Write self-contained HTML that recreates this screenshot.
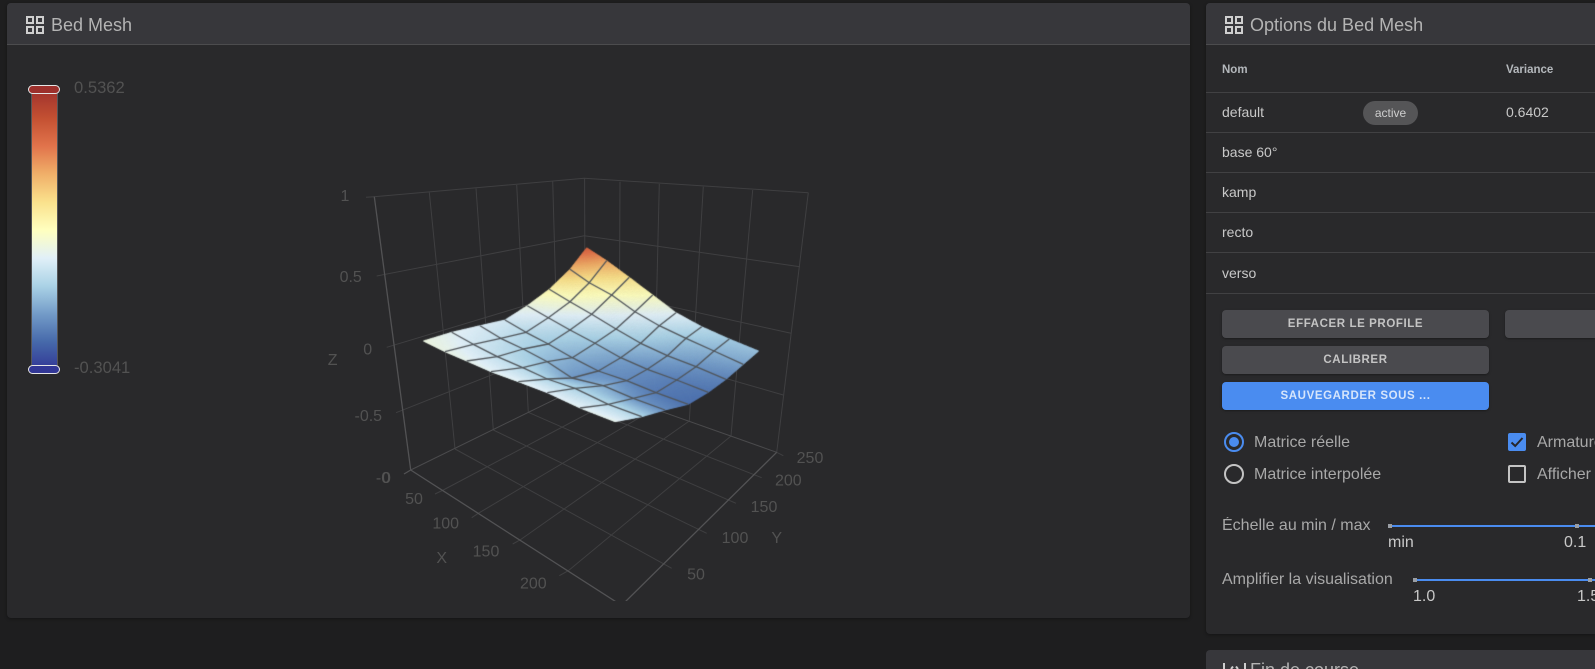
<!DOCTYPE html>
<html lang="fr">
<head>
<meta charset="utf-8">
<title>Bed Mesh</title>
<style>
html,body{margin:0;padding:0;width:1595px;height:669px;overflow:hidden;background:#1e1e1f;font-family:"Liberation Sans",Arial,sans-serif;}
#root{position:relative;width:1595px;height:669px;overflow:hidden;}
.abs{position:absolute;white-space:nowrap;}
.panel{position:absolute;background:#29292b;border-radius:4px;box-shadow:0 1px 3px rgba(0,0,0,.35);overflow:hidden;}
.head{position:absolute;left:0;top:0;right:0;height:41px;background:#37373b;border-bottom:1px solid #4c4c4e;}
.title{position:absolute;top:0;height:41px;line-height:41px;font-size:18px;color:#b4b4b4;white-space:nowrap;}
.sep{position:absolute;left:1206px;right:0;height:1px;background:#414143;}
.cell{position:absolute;font-size:14px;color:#c8c8c8;white-space:nowrap;line-height:16px;}
.th{position:absolute;font-size:11.5px;font-weight:bold;color:#b4b8bc;line-height:14px;white-space:nowrap;}
.chip{position:absolute;left:1363px;top:101px;width:55px;height:24px;border-radius:12px;background:#555557;color:#cfcfcf;font-size:12px;line-height:24px;text-align:center;}
.btn{position:absolute;left:1222px;width:267px;height:28px;border-radius:4px;background:#4a4a4e;color:#c4c4c4;font-size:11.5px;font-weight:bold;letter-spacing:.6px;line-height:28px;text-align:center;box-shadow:0 1px 2px rgba(0,0,0,.35);white-space:nowrap;}
.lab{position:absolute;font-size:16px;color:#a8a8a8;line-height:18px;white-space:nowrap;overflow:hidden;}
.val{position:absolute;font-size:16px;color:#c8c8c8;line-height:18px;white-space:nowrap;}
.track{position:absolute;height:2px;background:#4a8cf0;right:0;}
.tick{position:absolute;width:4px;height:4px;background:#9a9ea4;}
.legend-pill{position:absolute;left:28px;width:30px;height:7px;border:1px solid #e6e6e6;border-radius:5px;}
svg text{font-family:"Liberation Sans",Arial,sans-serif;font-size:16px;fill:#525252;text-anchor:middle;dominant-baseline:central;}
</style>
</head>
<body>
<div id="root">

<div class="panel" style="left:7px;top:3px;width:1183px;height:615px;">
  <div class="head"></div>
</div>
<svg class="abs" style="left:26px;top:16px" width="18" height="18" viewBox="0 0 18 18"><g fill="none" stroke="#cfcfcf" stroke-width="2"><rect x="1" y="1" width="6" height="6"/><rect x="11" y="1" width="6" height="6"/><rect x="1" y="11" width="6" height="6"/><rect x="11" y="11" width="6" height="6"/></g></svg>
<div class="title" style="left:51px;top:5px;">Bed Mesh</div>

<!-- legend -->
<div class="abs" style="left:32px;top:90px;width:25px;height:280px;box-shadow:0 0 0 1px rgba(190,190,190,.3);background:linear-gradient(to bottom,rgb(160,50,45) 0%,rgb(195,80,50) 10%,rgb(225,115,75) 20%,rgb(240,175,105) 30%,rgb(250,225,140) 40%,rgb(255,255,191) 50%,rgb(225,240,248) 60%,rgb(170,210,230) 70%,rgb(115,155,200) 80%,rgb(70,105,170) 90%,rgb(50,55,150) 100%);"></div>
<div class="legend-pill" style="top:85px;background:#9c302c;"></div>
<div class="legend-pill" style="top:365px;background:#323796;"></div>
<div class="abs" style="left:74px;top:78px;font-size:16.6px;line-height:20px;color:#525252;">0.5362</div>
<div class="abs" style="left:74px;top:358px;font-size:16.6px;line-height:20px;color:#525252;">-0.3041</div>

<!-- 3D axes -->
<svg class="abs" style="left:0;top:0" width="1190" height="601" viewBox="0 0 1190 601">
  <g fill="none" stroke="#3f3f41" stroke-width="1">
    <path d="M366 197.3L374.3 196.7L584.3 178.3L808.3 192.7"/>
    <path d="M429.3 192.3L455 449M476 188.3L493.3 430M516.7 185L528.3 412.3M552.7 181L558.7 398"/>
    <path d="M376.7 276L584.3 235.7L800 266.7"/>
    <path d="M386.7 347.3L585 287.5L791 333.3"/>
    <path d="M396 412.7L585 338L783.3 395"/>
    <path d="M620 181.7L619 397M659.3 184L654 409M703.3 186.7L689.3 421M752.7 190L731 436"/>
    <path d="M584.6 178.3L585.2 384.5"/>
    <path d="M808.3 192.7L776.7 452.3"/>
    <path d="M435 494L443.3 490L619 397M471.7 517.7L478.3 513.3L654 409M512.7 544L520 540L689.3 421M559.3 575.7L568.3 570.7L731 436"/>
    <path d="M455 449L671.7 568.3M493.3 430L706.7 533.3M528.3 412.3L736 503.3M558.7 398L761.7 477.7"/>
    <path d="M776.7 452.3L783.3 455.7"/>
  </g>
  <g fill="none" stroke="#4a4a4c" stroke-width="1">
    <path d="M410.7 470L585.2 384.5L776.7 452.3"/>
  </g>
  <g fill="none" stroke="#525254" stroke-width="1.3">
    <path d="M374.3 196.7L410.7 470L621.6 605.4L776.7 452.3"/>
    <path d="M404 474L410.7 470"/>
  </g>
  <text x="345" y="196.7">1</text>
  <text x="350.7" y="277.3">0.5</text>
  <text x="367.7" y="350">0</text>
  <text x="368.3" y="416.7">-0.5</text>
  <text x="383" y="478.3">-0</text>
  <text x="386.5" y="478.3">0</text>
  <text x="332.7" y="360.7">Z</text>
  <text x="414" y="499.3">50</text>
  <text x="445.7" y="524">100</text>
  <text x="486" y="552">150</text>
  <text x="533.3" y="584">200</text>
  <text x="441.7" y="558.3">X</text>
  <text x="696" y="575">50</text>
  <text x="735" y="538.3">100</text>
  <text x="764" y="507.7">150</text>
  <text x="788.3" y="481">200</text>
  <text x="810" y="458.3">250</text>
  <text x="776.7" y="538.3">Y</text>
</svg>
<canvas id="mesh" class="abs" style="left:0;top:0" width="1190" height="601"></canvas>

<!-- right panel -->
<div class="panel" style="left:1206px;top:3px;width:389px;height:631px;border-top-right-radius:0;border-bottom-right-radius:0;">
  <div class="head"></div>
</div>
<svg class="abs" style="left:1225px;top:16px" width="18" height="18" viewBox="0 0 18 18"><g fill="none" stroke="#cfcfcf" stroke-width="2"><rect x="1" y="1" width="6" height="6"/><rect x="11" y="1" width="6" height="6"/><rect x="1" y="11" width="6" height="6"/><rect x="11" y="11" width="6" height="6"/></g></svg>
<div class="title" style="left:1250px;top:5px;">Options du Bed Mesh</div>

<div class="th" style="left:1222px;top:63px;">Nom</div>
<div class="th" style="left:1506px;top:63px;">Variance</div>
<div class="sep" style="top:92px"></div>
<div class="sep" style="top:132px"></div>
<div class="sep" style="top:172px"></div>
<div class="sep" style="top:212px"></div>
<div class="sep" style="top:252px"></div>
<div class="sep" style="top:293px"></div>
<div class="cell" style="left:1222px;top:104px;">default</div>
<div class="chip">active</div>
<div class="cell" style="left:1506px;top:104px;">0.6402</div>
<div class="cell" style="left:1222px;top:144px;">base 60°</div>
<div class="cell" style="left:1222px;top:184px;">kamp</div>
<div class="cell" style="left:1222px;top:224px;">recto</div>
<div class="cell" style="left:1222px;top:265px;">verso</div>

<div class="btn" style="top:310px;">EFFACER LE PROFILE</div>
<div class="btn" style="top:310px;left:1505px;width:90px;border-radius:4px 0 0 4px;"></div>
<div class="btn" style="top:346px;">CALIBRER</div>
<div class="btn" style="top:382px;background:#4a8cf0;color:#d6e5fb;">SAUVEGARDER SOUS ...</div>

<svg class="abs" style="left:1224px;top:432px" width="20" height="52" viewBox="0 0 20 52">
  <circle cx="10" cy="10" r="9" fill="none" stroke="#4a8cf0" stroke-width="2"/>
  <circle cx="10" cy="10" r="5" fill="#4a8cf0"/>
  <circle cx="10" cy="42" r="9" fill="none" stroke="#c4c4c4" stroke-width="2"/>
</svg>
<div class="lab" style="left:1254px;top:434px;">Matrice réelle</div>
<div class="lab" style="left:1254px;top:466px;">Matrice interpolée</div>

<svg class="abs" style="left:1508px;top:433px" width="18" height="50" viewBox="0 0 18 50">
  <rect x="0" y="0" width="18" height="18" rx="2" fill="#4a8cf0"/>
  <path d="M3.5 9.5L7.2 13L14.5 5" fill="none" stroke="#26262a" stroke-width="2"/>
  <rect x="1" y="33" width="16" height="16" rx="1" fill="none" stroke="#c4c4c4" stroke-width="2"/>
</svg>
<div class="lab" style="left:1537px;top:434px;width:58px;">Armature</div>
<div class="lab" style="left:1537px;top:466px;width:58px;">Afficher</div>

<div class="lab" style="left:1222px;top:517px;">Échelle au min / max</div>
<div class="track" style="left:1390px;top:525px;"></div>
<div class="tick" style="left:1388px;top:524px;"></div>
<div class="tick" style="left:1575px;top:524px;"></div>
<div class="val" style="left:1388px;top:534px;">min</div>
<div class="val" style="left:1564px;top:534px;">0.1</div>

<div class="lab" style="left:1222px;top:571px;">Amplifier la visualisation</div>
<div class="track" style="left:1415px;top:579px;"></div>
<div class="tick" style="left:1413px;top:578px;"></div>
<div class="tick" style="left:1588px;top:578px;"></div>
<div class="val" style="left:1413px;top:588px;">1.0</div>
<div class="val" style="left:1577px;top:588px;width:18px;overflow:hidden;">1.5</div>

<!-- next panel -->
<div class="panel" style="left:1206px;top:650px;width:389px;height:19px;background:#37373b;border-radius:4px 0 0 0;box-shadow:none;">
  <svg style="position:absolute;left:17px;top:13px" width="24" height="6" viewBox="0 0 24 6"><path d="M1 0V6M22 0V6M8 6L10 3.5M15 6L13 3.5" fill="none" stroke="#cfcfcf" stroke-width="2"/></svg>
  <div class="title" style="left:44px;top:0;">Fin de course</div>
</div>

</div>
<script>
(function(){
var P=[
[[586.7,247.7],[606.7,260.7],[629.3,277.3],[652.7,295],[676,312.7],[701.7,326.7],[729.3,339],[758.7,351]],
[[570,269.3],[589.3,282.7],[611.7,295],[635,311.7],[659.3,325.7],[686,338.3],[714,351],[743.3,364.3]],
[[549.3,289.3],[570,301.7],[591.7,314.3],[616,329],[640.7,343.3],[667.3,355.7],[696,366.7],[726,379.3]],
[[527.3,305.7],[548.3,317.7],[570,330],[595,343.3],[620.7,357.7],[647.3,369.3],[676.7,380],[708.3,392.3]],
[[505,320],[526,332.3],[548.3,344],[572.3,357.7],[598.3,371],[626.7,380.7],[656,392.7],[688.3,404.3]],
[[480,325.7],[500.7,338.3],[523.3,349],[547.3,361.7],[572,378],[603.3,385.7],[633.3,398.3],[665,410]],
[[451.7,332.3],[473.3,344.3],[497.3,356.7],[522.7,367.7],[547.3,379],[575,388.3],[608.3,404.3],[641.7,416.7]],
[[423.3,341],[445,351.7],[466.7,361],[491,371.7],[518.3,381.7],[547.3,392.7],[580,408],[615,421.7]]];
var T=[
[.85,.72,.6,.5,.41,.34,.29,.27],
[.68,.57,.5,.42,.35,.29,.25,.22],
[.53,.47,.41,.34,.28,.23,.19,.16],
[.44,.39,.33,.28,.22,.18,.15,.13],
[.38,.33,.29,.24,.19,.17,.14,.12],
[.39,.35,.31,.26,.20,.24,.19,.17],
[.41,.38,.35,.33,.31,.31,.33,.31],
[.44,.43,.42,.41,.41,.40,.41,.42]];
var S=[[50,55,150],[70,105,170],[115,155,200],[170,210,230],[225,240,248],[255,255,191],[250,225,140],[240,175,105],[225,115,75],[195,80,50],[160,50,45]];
function col(t){t=Math.max(0,Math.min(.9999,t))*10;var k=Math.floor(t),f=t-k,a=S[k],b=S[k+1];
return 'rgb('+Math.round(a[0]+(b[0]-a[0])*f)+','+Math.round(a[1]+(b[1]-a[1])*f)+','+Math.round(a[2]+(b[2]-a[2])*f)+')';}
var c=document.getElementById('mesh').getContext('2d');
function bil(a,b,d,e,u,v){return a*(1-u)*(1-v)+b*u*(1-v)+d*(1-u)*v+e*u*v;}
var N=24;
for(var j=0;j<7;j++)for(var i=0;i<7;i++){
 var A=P[j][i],B=P[j][i+1],D=P[j+1][i],E=P[j+1][i+1];
 for(var m=0;m<N;m++)for(var n=0;n<N;n++){
  var u0=n/N,u1=(n+1)/N,v0=m/N,v1=(m+1)/N;
  var t=bil(T[j][i],T[j][i+1],T[j+1][i],T[j+1][i+1],(u0+u1)/2,(v0+v1)/2);
  var cc=col(t);c.fillStyle=cc;c.strokeStyle=cc;c.lineWidth=.6;
  c.beginPath();
  [[u0,v0],[u1,v0],[u1,v1],[u0,v1]].forEach(function(w,idx){
   var x=bil(A[0],B[0],D[0],E[0],w[0],w[1]),y=bil(A[1],B[1],D[1],E[1],w[0],w[1]);
   if(idx)c.lineTo(x,y);else c.moveTo(x,y);});
  c.closePath();c.fill();c.stroke();
 }
}
c.strokeStyle='rgb(80,85,90)';c.lineWidth=1.3;c.lineJoin='round';
for(var r=1;r<7;r++){
 c.beginPath();for(var q=0;q<8;q++){if(q)c.lineTo(P[r][q][0],P[r][q][1]);else c.moveTo(P[r][q][0],P[r][q][1]);}c.stroke();
 c.beginPath();for(var q2=0;q2<8;q2++){if(q2)c.lineTo(P[q2][r][0],P[q2][r][1]);else c.moveTo(P[q2][r][0],P[q2][r][1]);}c.stroke();
}
})();
</script>
</body>
</html>
